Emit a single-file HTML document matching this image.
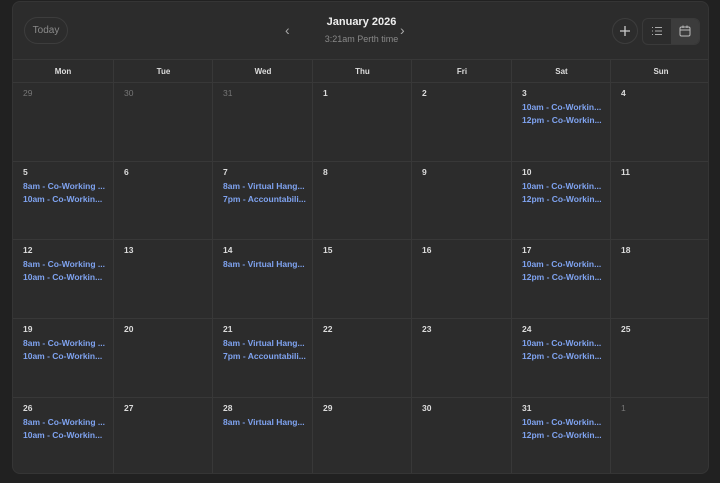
<!DOCTYPE html>
<html><head><style>
body{margin:0;width:720px;height:483px;background:#212121;font-family:"Liberation Sans",sans-serif;overflow:hidden;position:relative}
.panel{position:absolute;left:12px;top:1px;width:697px;height:473px;background:#2c2c2c;border-radius:8px;border:1px solid #353535;box-sizing:border-box;overflow:hidden}
.today{position:absolute;left:11px;top:15px;width:42px;height:25px;border:1px solid #3d3d3d;border-radius:14px;color:#8a8a8a;font-size:10px;line-height:25px;text-align:center}
.title{position:absolute;left:0;width:697px;text-align:center;top:14px;color:#eee;font-weight:bold;font-size:11px}
.sub{position:absolute;left:0;width:697px;text-align:center;top:32px;color:#888;font-size:9px}
.arr{position:absolute;top:20px;color:#aaa;font-size:14px}
.plus{position:absolute;left:599px;top:16px;width:24px;height:24px;border:1px solid #3d3d3d;border-radius:50%}
.seg{position:absolute;left:629px;top:16px;width:56px;height:25px;border:1px solid #3a3a3a;border-radius:6px;overflow:hidden}
.seg .on{position:absolute;right:0;top:0;width:28px;height:25px;background:#3c3c3c}
.hd{position:absolute;top:57px;height:23px;color:#ddd;font-weight:bold;font-size:8px;line-height:23px;text-align:center;border-top:1px solid #383838}
.cell{position:absolute;border-left:1px solid #383838;border-top:1px solid #383838;box-sizing:border-box}
.n{position:absolute;left:10px;top:5px;color:#ddd;font-size:8.5px;font-weight:bold}
.n.o{color:#777;font-weight:normal}
.e{position:absolute;left:10px;color:#7fa3f0;font-size:8.5px;font-weight:bold;white-space:nowrap}
</style></head><body>
<div class="panel" id="p">
<div class="today">Today</div>
<div class="title">January 2026</div>
<div class="sub">3:21am Perth time</div>
<div class="arr" style="left:272px">‹</div>
<div class="arr" style="left:387px">›</div>
<div class="plus"><svg width="24" height="24"><path d="M12 7v10M7 12h10" stroke="#ccc" stroke-width="1.3"/></svg></div>
<div class="seg"><div class="on"></div>
<svg style="position:absolute;left:8px;top:6px" width="12" height="12"><g stroke="#aaa" stroke-width="1"><path d="M1 2.5h1M4 2.5h7M1 6h1M4 6h7M1 9.5h1M4 9.5h7"/></g></svg>
<svg style="position:absolute;left:36px;top:6px" width="12" height="12"><g stroke="#bbb" stroke-width="1" fill="none"><rect x="1" y="2" width="10" height="9" rx="1.5"/><path d="M1 5h10M4 0.5v2.5M8 0.5v2.5"/></g></svg>
</div>
</div>
<script>
const p=document.getElementById('p');
const xs=[0,100,199,299,398,498,597,697];
const ys=[80,159,237,316,395,473];
['Mon','Tue','Wed','Thu','Fri','Sat','Sun'].forEach((d,i)=>{p.innerHTML+=`<div class="hd" style="left:${xs[i]}px;width:${xs[i+1]-xs[i]}px;${i?'border-left:1px solid #383838;':''}">${d}</div>`});
const nums=[[29,30,31,1,2,3,4],[5,6,7,8,9,10,11],[12,13,14,15,16,17,18],[19,20,21,22,23,24,25],[26,27,28,29,30,31,1]];
const A='8am - Co-Working ...',B='10am - Co-Workin...',C='12pm - Co-Workin...',V='8am - Virtual Hang...',Ac='7pm - Accountabili...';
const ev={'0,5':[B,C],'1,0':[A,B],'1,2':[V,Ac],'1,5':[B,C],'2,0':[A,B],'2,2':[V],'2,5':[B,C],'3,0':[A,B],'3,2':[V,Ac],'3,5':[B,C],'4,0':[A,B],'4,2':[V],'4,5':[B,C]};
for(let r=0;r<5;r++)for(let c=0;c<7;c++){const o=(r==0&&c<3)||(r==4&&c==6);let h=`<div class="cell" style="left:${xs[c]-(c?0:1)}px;top:${ys[r]}px;width:${xs[c+1]-xs[c]+1}px;height:${ys[r+1]-ys[r]+1}px"><div class="n${o?' o':''}">${nums[r][c]}</div>`;(ev[r+','+c]||[]).forEach((t,k)=>h+=`<div class="e" style="top:${19+k*13}px">${t}</div>`);p.innerHTML+=h+'</div>'}
</script>
</body></html>
